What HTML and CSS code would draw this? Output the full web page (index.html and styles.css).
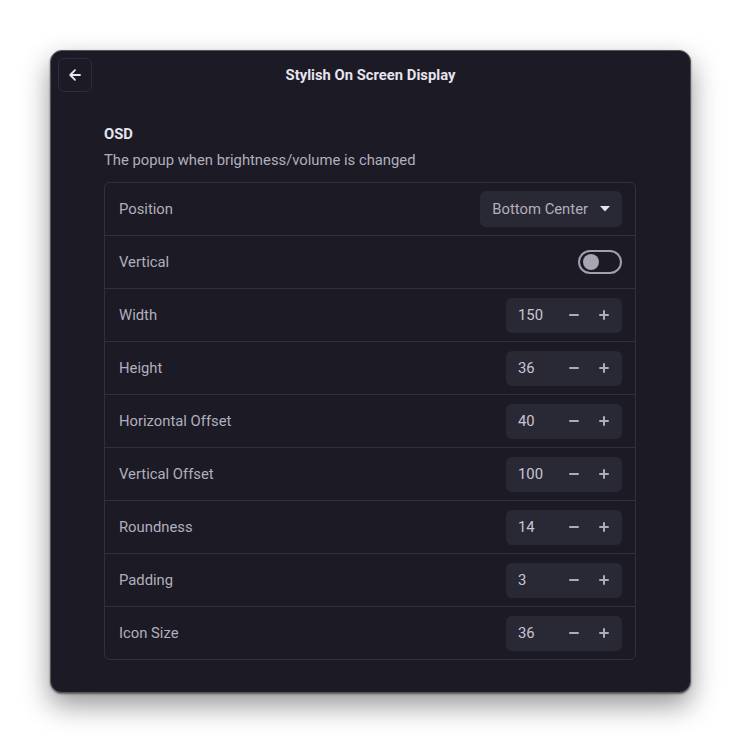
FILE: index.html
```html
<!DOCTYPE html>
<html>
<head>
<meta charset="utf-8">
<link rel="stylesheet" href="styles.css">
</head>
<body>
<div class="window">
  <div class="header">
    <button class="back" aria-label="Back">
      <svg width="16" height="16" viewBox="0 0 16 16"><path d="M13 8H3.5M8 3.2L3.2 8 8 12.8" fill="none" stroke="#e8e6f0" stroke-width="1.8" stroke-linecap="round" stroke-linejoin="round"/></svg>
    </button>
    <div class="title">Stylish On Screen Display</div>
    <div></div>
  </div>
  <div class="content">
    <div class="group-title">OSD</div>
    <div class="group-desc">The popup when brightness/volume is changed</div>
    <div class="list">
      <div class="row"><span class="label">Position</span>
        <div class="dropdown"><span>Bottom Center</span><svg width="10" height="6" viewBox="0 0 10 6"><path d="M0 0h10L5 5.5z" fill="#e6e4ee"/></svg></div>
      </div>
      <div class="row"><span class="label">Vertical</span>
        <div class="switch"><span class="knob"></span></div>
      </div>
      <div class="row"><span class="label">Width</span><div class="spin"><span class="val">150</span><span class="btn minus"></span><span class="btn plus"></span></div></div>
      <div class="row"><span class="label">Height</span><div class="spin"><span class="val">36</span><span class="btn minus"></span><span class="btn plus"></span></div></div>
      <div class="row"><span class="label">Horizontal Offset</span><div class="spin"><span class="val">40</span><span class="btn minus"></span><span class="btn plus"></span></div></div>
      <div class="row"><span class="label">Vertical Offset</span><div class="spin"><span class="val">100</span><span class="btn minus"></span><span class="btn plus"></span></div></div>
      <div class="row"><span class="label">Roundness</span><div class="spin"><span class="val">14</span><span class="btn minus"></span><span class="btn plus"></span></div></div>
      <div class="row"><span class="label">Padding</span><div class="spin"><span class="val">3</span><span class="btn minus"></span><span class="btn plus"></span></div></div>
      <div class="row"><span class="label">Icon Size</span><div class="spin"><span class="val">36</span><span class="btn minus"></span><span class="btn plus"></span></div></div>
    </div>
  </div>
</div>
</body>
</html>
```
FILE: styles.css
```css
html, body { margin: 0; padding: 0; background: #ffffff; }
body {
  padding: 50px 0 51px 50px;
  min-height: 744px;
  box-sizing: border-box;
  font-family: Roboto, "Liberation Sans", sans-serif;
  font-size: 14.8px;
}
.window {
  width: 639px;
  height: 641px;
  background: #1b1a25;
  border: 1px solid #57555f;
  border-radius: 12px;
  box-shadow: 0 12px 28px rgba(0,0,0,0.42), 0 1px 2px rgba(0,0,0,0.5);
  box-sizing: content-box;
}
.header {
  display: grid;
  grid-template-columns: 34px 1fr 34px;
  align-items: start;
  height: 48px;
  padding: 7px 7px 0 7px;
  box-sizing: border-box;
}
.back {
  width: 34px;
  height: 34px;
  border: 1px solid #2e2c3a;
  border-radius: 6px;
  background: transparent;
  display: flex;
  align-items: center;
  justify-content: center;
  padding: 0;
}
.title {
  text-align: center;
  line-height: 34px;
  margin-top: 0;
  color: #e6e4ee;
  font-weight: 700;
}
.content {
  padding: 25px 54px 0 53px;
}
.group-title {
  color: #e6e4ee;
  font-weight: 700;
  line-height: 20px;
}
.group-desc {
  color: #b2afbd;
  line-height: 20px;
  margin-top: 6px;
  margin-bottom: 12px;
}
.list {
  border: 1px solid #31303c;
  border-radius: 6px;
}
.row {
  height: 52px;
  display: flex;
  align-items: center;
  justify-content: space-between;
  padding: 0 13px 0 14px;
  border-top: 1px solid #31303c;
}
.row:first-child { border-top: none; }
.label { color: #b2afbd; }
.dropdown {
  height: 36px;
  background: #292835;
  border-radius: 6px;
  display: flex;
  align-items: center;
  padding: 0 12px;
  gap: 10px;
  color: #b2afbd;
}
.dropdown svg { margin-left: 2px; }
.switch {
  width: 44px;
  height: 24px;
  box-sizing: border-box;
  border: 2px solid #a3a0ae;
  border-radius: 12px;
  display: flex;
  align-items: center;
  padding-left: 3px;
}
.knob {
  width: 16px;
  height: 16px;
  border-radius: 50%;
  background: #a7a4b3;
}
.spin {
  width: 116px;
  height: 35px;
  background: #292835;
  border-radius: 6px;
  display: flex;
  align-items: center;
  box-sizing: border-box;
  padding: 0 3px 0 12px;
  color: #c9c6d4;
}
.val { flex: 1; }
.btn {
  width: 30px;
  height: 30px;
  position: relative;
}
.btn::before, .btn::after {
  content: "";
  position: absolute;
  background: #aeabbb;
  border-radius: 1px;
}
.minus::before {
  width: 10px; height: 2px; left: 10px; top: 14px;
}
.plus::before {
  width: 10px; height: 2px; left: 10px; top: 14px;
}
.plus::after {
  width: 2px; height: 10px; left: 14px; top: 10px;
}
```
